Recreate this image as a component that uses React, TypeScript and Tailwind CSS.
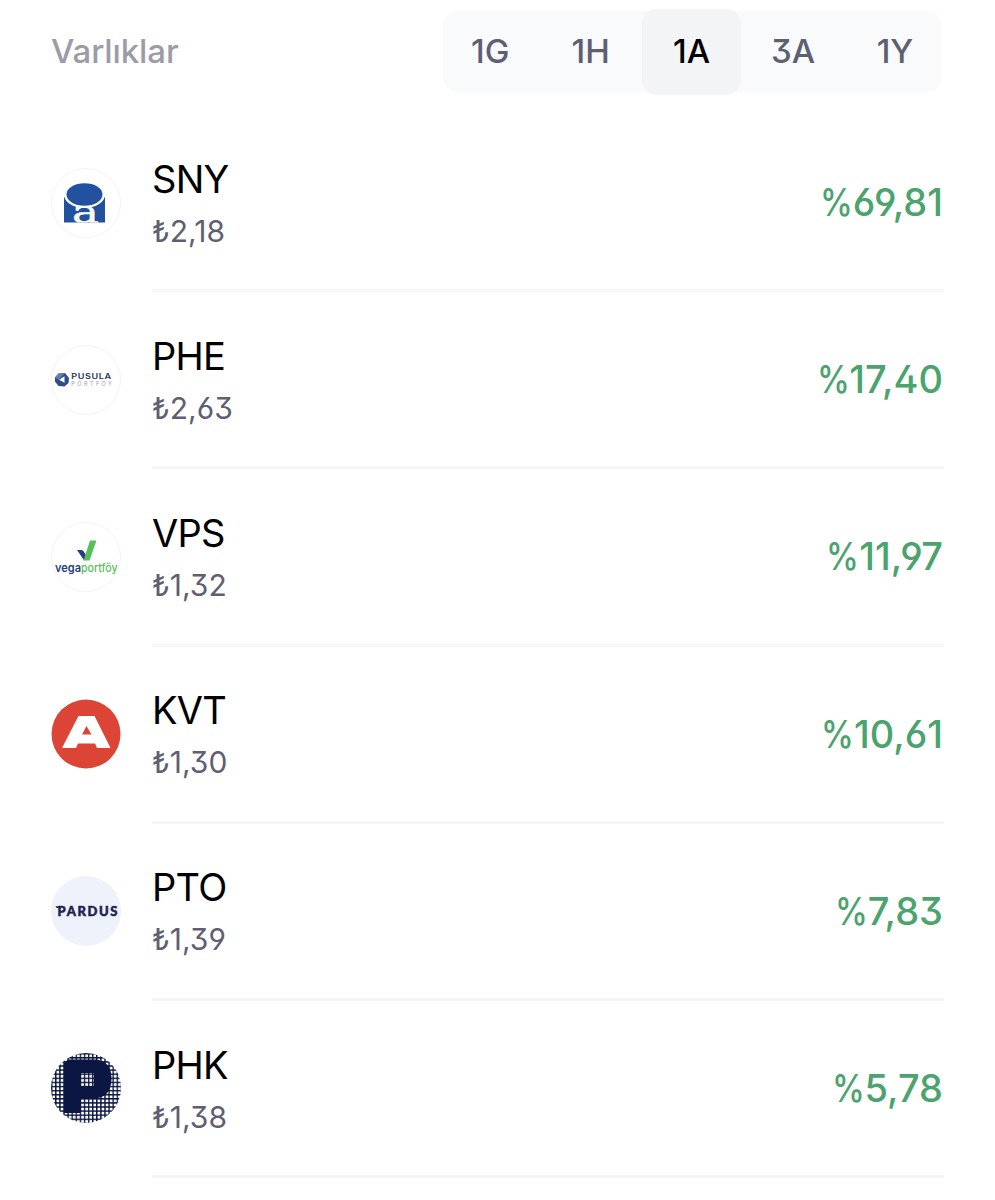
import { useState } from "react"
import clsx from "clsx"

const periods = ["1G", "1H", "1A", "3A", "1Y"]

function SnyLogo() {
  return (
    <svg viewBox="0 0 70 70" className="size-[70px]">
      <clipPath id="sny-body">
        <rect x="13" y="29" width="41" height="25.5" />
      </clipPath>
      <circle cx="35" cy="35" r="34.5" fill="#fff" stroke="#f3f3f5" />
      <g clipPath="url(#sny-body)">
        <rect x="13" y="29" width="41" height="26" fill="#22529f" />
        <ellipse cx="33.5" cy="26.5" rx="20.5" ry="13.5" fill="#fff" />
        <text x="21" y="54.5" fontSize="31" textLength="27" lengthAdjust="spacingAndGlyphs" fill="#fff" stroke="#fff" strokeWidth="0.4" fontFamily="DejaVu Serif, serif">a</text>
      </g>
      <ellipse cx="33.5" cy="26.5" rx="18" ry="11.2" fill="#22529f" />
    </svg>
  )
}

function PheLogo() {
  return (
    <svg viewBox="0 0 70 70" className="size-[70px]">
      <circle cx="35" cy="35" r="34.5" fill="#fff" stroke="#f3f3f5" />
      <path d="M7.5 28.5L14 28l4 5-.5 5-4 3.5-6-.5L4 36.500v-4z" fill="#2f4d8a" />
      <path d="M4 32.5l3.5-4L14 28l-6.5 6.5z" fill="#5f7fb5" />
      <path d="M8 34.800l5.500-3.500v6.500z" fill="#fff" />
      <text x="20.3" y="34" fontSize="7" textLength="40.5" lengthAdjust="spacingAndGlyphs" letterSpacing="0.5" fill="#26345f" fontFamily="Inter, sans-serif" fontWeight="600">PUSULA</text>
      <text x="20.3" y="40.8" fontSize="5.5" textLength="40.5" fill="#9a9eac" fontFamily="Inter, sans-serif">PORTFÖY</text>
    </svg>
  )
}

function VpsLogo() {
  return (
    <svg viewBox="0 0 70 70" className="size-[70px]">
      <circle cx="35" cy="35" r="34.5" fill="#fff" stroke="#f3f3f5" />
      <path d="M26 28h4.500q1.500 0 2.200 1.500l3 4.500-2.500 4.500z" fill="#233f80" />
      <path d="M39 18.500h6.500l-7 20H32.500z" fill="#56c05a" />
      <text x="4" y="49.800" fontSize="11.5" textLength="26" lengthAdjust="spacingAndGlyphs" fill="#233f80" fontFamily="Inter, sans-serif" fontWeight="600">vega</text>
      <text x="30" y="49.800" fontSize="11.5" textLength="36.5" lengthAdjust="spacingAndGlyphs" fill="#56c05a" fontFamily="Inter, sans-serif" fontWeight="500">portföy</text>
    </svg>
  )
}

function KvtLogo() {
  return (
    <svg viewBox="0 0 70 70" className="size-[70px]">
      <circle cx="35" cy="35" r="34.5" fill="#dc4535" />
      <path fillRule="evenodd" d="M27.5 17h16L59.5 49H46l-2-4.500H27L25 49H11zM35.500 27l-4.500 8.500h9.500z" fill="#fff" />
    </svg>
  )
}

function PtoLogo() {
  return (
    <svg viewBox="0 0 70 70" className="size-[70px]">
      <circle cx="35" cy="35" r="35" fill="#eef2fb" />
      <text x="6.5" y="39.5" fontSize="13" textLength="60" fill="#1e2350" stroke="#1e2350" strokeWidth="0.5" fontFamily="Lato, sans-serif" fontWeight="900">PARDUS</text>
      <path d="M4.500 30.200h5v1.800h-4z" fill="#1e2350" />
    </svg>
  )
}

function PhkLogo() {
  return (
    <svg viewBox="0 0 70 70" className="size-[70px]">
      <pattern id="phk-grid" width="4.1" height="4.1" patternUnits="userSpaceOnUse">
        <path d="M0 .7h4.1M.7 0v4.1" stroke="#0b1742" strokeWidth="1.4" />
      </pattern>
      <circle cx="35" cy="35" r="35" fill="url(#phk-grid)" />
      <path fillRule="evenodd" d="M17 6.500h28q15.500 2 15.500 19 0 20-19 20H30V60H13V10zM30 20v13h13V20z" fill="#0b1742" />
    </svg>
  )
}

const assets = [
  { code: "SNY", price: "2,18", change: "69,81", Logo: SnyLogo },
  { code: "PHE", price: "2,63", change: "17,40", Logo: PheLogo },
  { code: "VPS", price: "1,32", change: "11,97", Logo: VpsLogo },
  { code: "KVT", price: "1,30", change: "10,61", Logo: KvtLogo },
  { code: "PTO", price: "1,39", change: "7,83", Logo: PtoLogo },
  { code: "PHK", price: "1,38", change: "5,78", Logo: PhkLogo },
]

export default function App() {

  const [period, setPeriod] = useState("1A")

  return (

    <main className="h-[1200px] w-[995px] overflow-hidden bg-white px-[51px] pt-[8px] font-['Inter',sans-serif] [font-feature-settings:'ss01']">

      <div className="flex h-[87px] items-center justify-between">

        <h1 className="text-[33px] font-medium tracking-[-0.1px] text-[#9c9ca8]">
          Varlıklar
        </h1>

        <div className="mr-[2px] flex h-[81px] w-[499px] items-center rounded-[15px] bg-[#f9fafc]">
          {periods.map((p, i) => (
            <button
              key={p}
              onClick={() => setPeriod(p)}
              className={clsx(
                "shrink-0 text-[33px] font-medium",
                i === 0 && "-ml-[3px]",
                p === period
                  ? "mx-px h-[86px] w-[99px] rounded-[15px] bg-[#f3f4f6] text-black"
                  : "h-[81px] text-[#5f5f73]",
                p !== period && (i > 2 ? "w-[102px]" : "w-[100.5px]")
              )}
            >
              {p}
            </button>
          ))}
        </div>

      </div>

      <ul className="pt-[20px]">
        {assets.map(({ code, price, change, Logo }) => (
          <li key={code} className="flex h-[177.2px] gap-[31px]">

            <div className="pt-[52.5px]">
              <Logo />
            </div>

            <div className="flex h-full flex-1 items-center justify-between border-b-3 border-[#f5f6f8]">
              <div className="pt-[5px]">
                <div className="text-[38px] leading-[52px] tracking-[-0.7px] text-black">{code}</div>
                <div className="text-[30px] leading-[52px] text-[#5f5f73]">₺{price}</div>
              </div>
              <div className="pr-px pt-px text-[38px] font-medium text-[#4ba36d]">
                <span className="inline-block origin-right scale-x-[0.87]">%</span>
                {change}
              </div>
            </div>

          </li>
        ))}
      </ul>

    </main>
  )
}
